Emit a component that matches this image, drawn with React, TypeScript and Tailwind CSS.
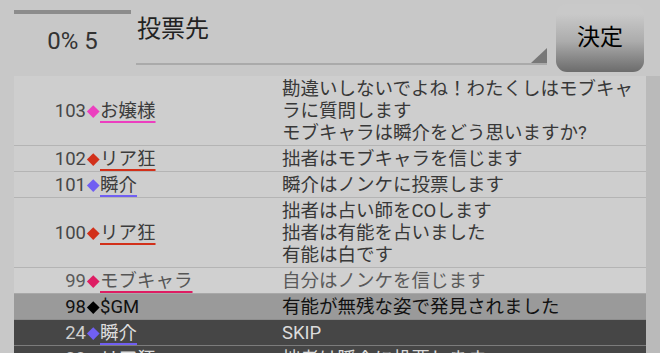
import React from "react";

type Variant = "normal" | "muted" | "gm" | "dark";

interface LogRow {
  no: number;
  name: string;
  color: string;
  text: string;
  variant?: Variant;
}

const rows: LogRow[] = [
  {
    no: 103,
    name: "お嬢様",
    color: "#ec3fbf",
    text: "勘違いしないでよね！わたくしはモブキャラに質問します\nモブキャラは瞬介をどう思いますか?",
  },
  { no: 102, name: "リア狂", color: "#d2301a", text: "拙者はモブキャラを信じます" },
  { no: 101, name: "瞬介", color: "#705ff2", text: "瞬介はノンケに投票します" },
  {
    no: 100,
    name: "リア狂",
    color: "#d2301a",
    text: "拙者は占い師をCOします\n拙者は有能を占いました\n有能は白です",
  },
  { no: 99, name: "モブキャラ", color: "#de1d63", text: "自分はノンケを信じます", variant: "muted" },
  { no: 98, name: "$GM", color: "#000000", text: "有能が無残な姿で発見されました", variant: "gm" },
  { no: 24, name: "瞬介", color: "#705ff2", text: "SKIP", variant: "dark" },
  { no: 23, name: "リア狂", color: "#d2301a", text: "拙者は瞬介に投票します", variant: "dark" },
];

const rowStyles: Record<Variant, { row: string; no: string; name: string; msg: string }> = {
  normal: {
    row: "bg-[#cecece] border-[#b4b4b4]",
    no: "text-[#464646]",
    name: "text-[#3c3c3c]",
    msg: "text-[#383838]",
  },
  muted: {
    row: "bg-[#d0d0d0] border-[#a8a8a8]",
    no: "text-[#5a5a5a]",
    name: "text-[#555555]",
    msg: "text-[#5a5a5a]",
  },
  gm: {
    row: "bg-[#9a9a9a] border-[#8e8e8e]",
    no: "text-[#111111]",
    name: "text-[#111111]",
    msg: "text-[#111111]",
  },
  dark: {
    row: "bg-[#464646] border-[#7c7c7c]",
    no: "text-[#cfcfcf]",
    name: "text-[#dddddd]",
    msg: "text-[#dcdcdc]",
  },
};

function Row({ row }: { row: LogRow }) {
  const v = rowStyles[row.variant ?? "normal"];
  const underline = row.variant !== "gm";
  return (
    <div className={`flex border-b pt-[2px] pb-px ${v.row}`}>
      {/* 発言者 */}
      <div className="w-[268px] flex items-center leading-[22px]">
        <span className={`w-[72px] text-right ${v.no}`}>{row.no}</span>
        <span className="w-[14px] h-[22px] flex items-center justify-center">
          <span className="w-[8.5px] h-[8.5px] rotate-45" style={{ backgroundColor: row.color }} />
        </span>
        <span
          className={`${v.name} ${
            underline ? "underline decoration-2 underline-offset-[4px] [text-decoration-skip-ink:none]" : ""
          }`}
          style={underline ? { textDecorationColor: row.color } : undefined}
        >
          {row.name}
        </span>
      </div>
      {/* 発言内容 */}
      <div className={`flex-1 pr-[6px] leading-[22px] whitespace-pre-line ${v.msg}`}>{row.text}</div>
    </div>
  );
}

export default function App() {
  return (
    <div className="w-[660px] h-[353px] overflow-hidden bg-[#c8c8c8] font-[Roboto,'Noto_Sans_CJK_JP',sans-serif] text-[18.5px]">
      {/* ヘッダー */}
      <div className="h-[76px] flex">
        <div className="ml-[14px] w-[117px] pt-[10px]">
          <div className="h-[4px] bg-[#8c8c8c]" />
          <div className="mt-[13px] text-center text-[24px] leading-[28px] text-[#333333]">0% 5</div>
        </div>
        <div className="ml-[5px] w-[411px] flex flex-col">
          <div className="h-[63px] flex items-end justify-between">
            <span className="mb-[19px] pl-px text-[24px] leading-[30px] text-[#222222]">投票先</span>
            <svg width="16" height="15" viewBox="0 0 16 15" className="block">
              <polygon points="16,0 16,15 0,15" fill="#787878" />
            </svg>
          </div>
          <div className="h-[2px] bg-[#aaaaaa]" />
        </div>
        <button className="ml-[9px] mt-[4px] w-[88px] h-[68px] rounded-[11px] bg-linear-to-b from-[#c9c9c9] from-[15%] via-[#acacac] via-[55%] to-[#6c6c6c] text-[23px] text-black flex items-center justify-center">
          決定
        </button>
      </div>

      {/* ログ */}
      <div className="flex">
        <div className="w-[14px]" />
        <div className="w-[632px] bg-[#cecece]">
          {rows.map((r) => (
            <Row key={r.no} row={r} />
          ))}
        </div>
        <div className="w-[14px] bg-[#bababa]" />
      </div>
    </div>
  );
}
